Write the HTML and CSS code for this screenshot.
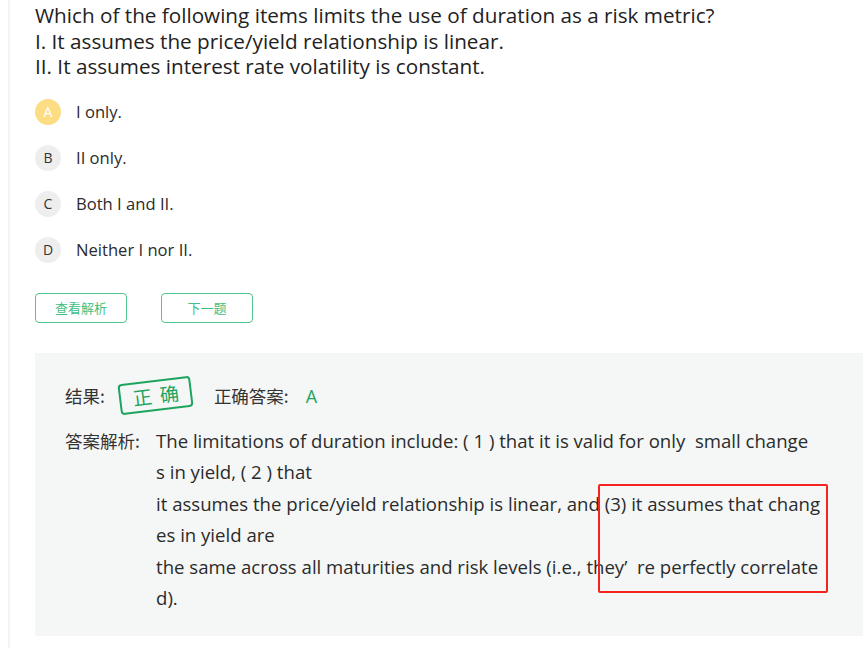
FILE: index.html
```html
<!DOCTYPE html>
<html lang="zh">
<head>
<meta charset="utf-8">
<link rel="stylesheet" href="styles.css">
</head>
<body>
<div class="page">
  <div class="question">Which of the following items limits the use of duration as a risk metric?<br>I. It assumes the price/yield relationship is linear.<br>II. It assumes interest rate volatility is constant.</div>
  <div class="options">
    <div class="option"><span class="letter letter-selected">A</span><span class="opt-text">I only.</span></div>
    <div class="option"><span class="letter">B</span><span class="opt-text">II only.</span></div>
    <div class="option"><span class="letter">C</span><span class="opt-text">Both I and II.</span></div>
    <div class="option"><span class="letter">D</span><span class="opt-text">Neither I nor II.</span></div>
  </div>
  <div class="buttons">
    <button class="btn">查看解析</button>
    <button class="btn">下一题</button>
  </div>
  <div class="analysis">
    <div class="result-row">
      <span class="label">结果:</span>
      <span class="stamp">正确</span>
      <span class="label answer-label">正确答案:</span>
      <span class="answer">A</span>
    </div>
    <div class="explain-row">
      <span class="label explain-label">答案解析:</span>
      <div class="explain-text">The limitations of duration include: ( 1 ) that it is valid for only &nbsp;small change<br>s in yield, ( 2 ) that<br>it assumes the price/yield relationship is linear, and (3) it assumes that chang<br>es in yield are<br>the same across all maturities and risk levels (i.e., they’&nbsp; re perfectly correlate<br>d).</div>
    </div>
    <div class="highlight"></div>
  </div>
</div>
</body>
</html>
```

FILE: styles.css
```css
html, body {
  margin: 0;
  padding: 0;
  background: #fff;
}
body {
  font-family: "Open Sans", "Noto Sans CJK SC", sans-serif;
  color: #2b2b2b;
}
.page {
  margin-left: 8px;
  border-left: 2px solid #f3f3f3;
  padding-left: 25px;
  min-height: 648px;
  box-sizing: border-box;
}
.question {
  font-size: 20.7px;
  line-height: 25.5px;
  padding-top: 3px;
  color: #222;
}
.options {
  margin-top: 19px;
  display: flex;
  flex-direction: column;
  gap: 20px;
}
.option {
  display: flex;
  align-items: center;
  height: 26px;
}
.letter {
  width: 26px;
  height: 26px;
  border-radius: 50%;
  background: #eeeeee;
  color: #333;
  font-size: 14px;
  display: flex;
  align-items: center;
  justify-content: center;
  flex: none;
}
.letter-selected {
  background: #fddd84;
  color: #fff;
}
.opt-text {
  margin-left: 15px;
  font-size: 16.6px;
  color: #2b2b2b;
}
.buttons {
  margin-top: 30px;
  display: flex;
  gap: 34px;
}
.btn {
  width: 92px;
  height: 30px;
  border: 1px solid #4cc68d;
  border-radius: 4px;
  background: #fff;
  color: #3fbf83;
  font-family: "Noto Sans CJK SC", sans-serif;
  font-size: 13px;
  padding: 0;
}
.analysis {
  position: relative;
  margin-top: 30px;
  background: #f4f7f6;
  padding: 21px 0 22px 30px;
}
.result-row {
  display: flex;
  align-items: center;
  height: 44px;
}
.label {
  font-family: "Noto Sans CJK SC", sans-serif;
  font-size: 17.5px;
  color: #333;
}
.stamp {
  margin-left: 14px;
  width: 73px;
  height: 31px;
  border: 2px solid #1fa460;
  border-radius: 4px;
  box-sizing: border-box;
  color: #1fa460;
  font-family: "Noto Sans CJK SC", sans-serif;
  font-size: 19px;
  line-height: 1;
  letter-spacing: 8px;
  padding: 0 0 2px 9px;
  display: flex;
  align-items: center;
  justify-content: center;
  transform: rotate(-7deg);
}
.answer-label {
  margin-left: 22px;
}
.answer {
  margin-left: 17px;
  font-size: 18px;
  color: #1fa460;
}
.explain-row {
  display: flex;
  margin-top: 7px;
}
.explain-label {
  width: 91px;
  flex: none;
  line-height: 31.5px;
}
.explain-text {
  font-size: 18.6px;
  line-height: 31.5px;
  color: #2b2b2b;
  white-space: nowrap;
}
.highlight {
  position: absolute;
  left: 563px;
  top: 131px;
  width: 230px;
  height: 109px;
  border: 2px solid #f5231f;
  border-radius: 2px;
  box-sizing: border-box;
}
```
